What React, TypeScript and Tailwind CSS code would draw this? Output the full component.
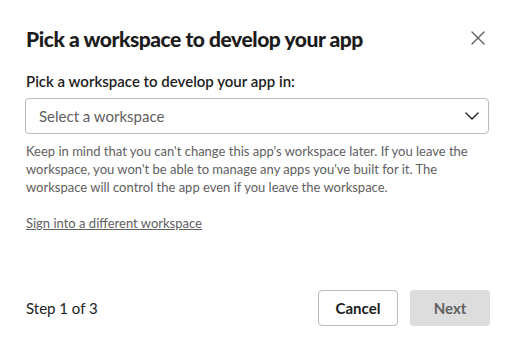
export default function App() {
  return (
    <div className="w-[514px] h-[349px] bg-white flex flex-col font-['Lato',sans-serif] text-[#1d1c1d]">
      {/* Header */}
      <div className="flex items-center justify-between pl-[26px] pr-[26px] pt-[20px] h-[56px]">
        <h1 className="text-[21px] font-black tracking-[-0.45px] leading-none">Pick a workspace to develop your app</h1>
        <button className="w-[24px] h-[24px] flex items-center justify-center text-[#616061] -mr-[2px]">
          <svg width="16" height="16" viewBox="0 0 16 16" fill="none" stroke="currentColor" strokeWidth="1.4" strokeLinecap="round">
            <path d="M2 2l12 12M14 2L2 14" />
          </svg>
        </button>
      </div>

      {/* Body */}
      <div className="px-[25px] pt-[14px] flex flex-col">
        <label className="pl-[1px] text-[15px] font-semibold leading-[22px]">Pick a workspace to develop your app in:</label>
        <div className="mt-[6px] h-[36px] border border-[#bbbabb] rounded-[4px] flex items-center justify-between pl-[13px] pr-[9px]">
          <span className="text-[15px] text-[#616061]">Select a workspace</span>
          <svg width="14" height="8" viewBox="0 0 14 8" fill="none" stroke="#1d1c1d" strokeWidth="1.3" strokeLinecap="round" strokeLinejoin="round">
            <path d="M1 1l6 6 6-6" />
          </svg>
        </div>
        <p className="pl-[1px] mt-[8px] text-[13px] leading-[18px] text-[#616061]">
          Keep in mind that you can't change this app's workspace later. If you leave the workspace, you won't be able to manage any apps you've built for it. The workspace will control the app even if you leave the workspace.
        </p>
        <a className="pl-[1px] mt-[18px] text-[13px] leading-[18px] text-[#616061] underline w-fit">Sign into a different workspace</a>
      </div>

      {/* Footer */}
      <div className="mt-auto flex items-center justify-between pl-[26px] pr-[24px] pb-[23px]">
        <span className="text-[15px]">Step 1 of 3</span>
        <div className="flex gap-[12px]">
          <button className="w-[80px] h-[36px] border border-[#bbbabb] rounded-[4px] text-[15px] font-bold">Cancel</button>
          <button className="w-[80px] h-[36px] rounded-[4px] bg-[#dddddd] text-[15px] font-bold text-[#616061]">Next</button>
        </div>
      </div>
    </div>
  );
}
